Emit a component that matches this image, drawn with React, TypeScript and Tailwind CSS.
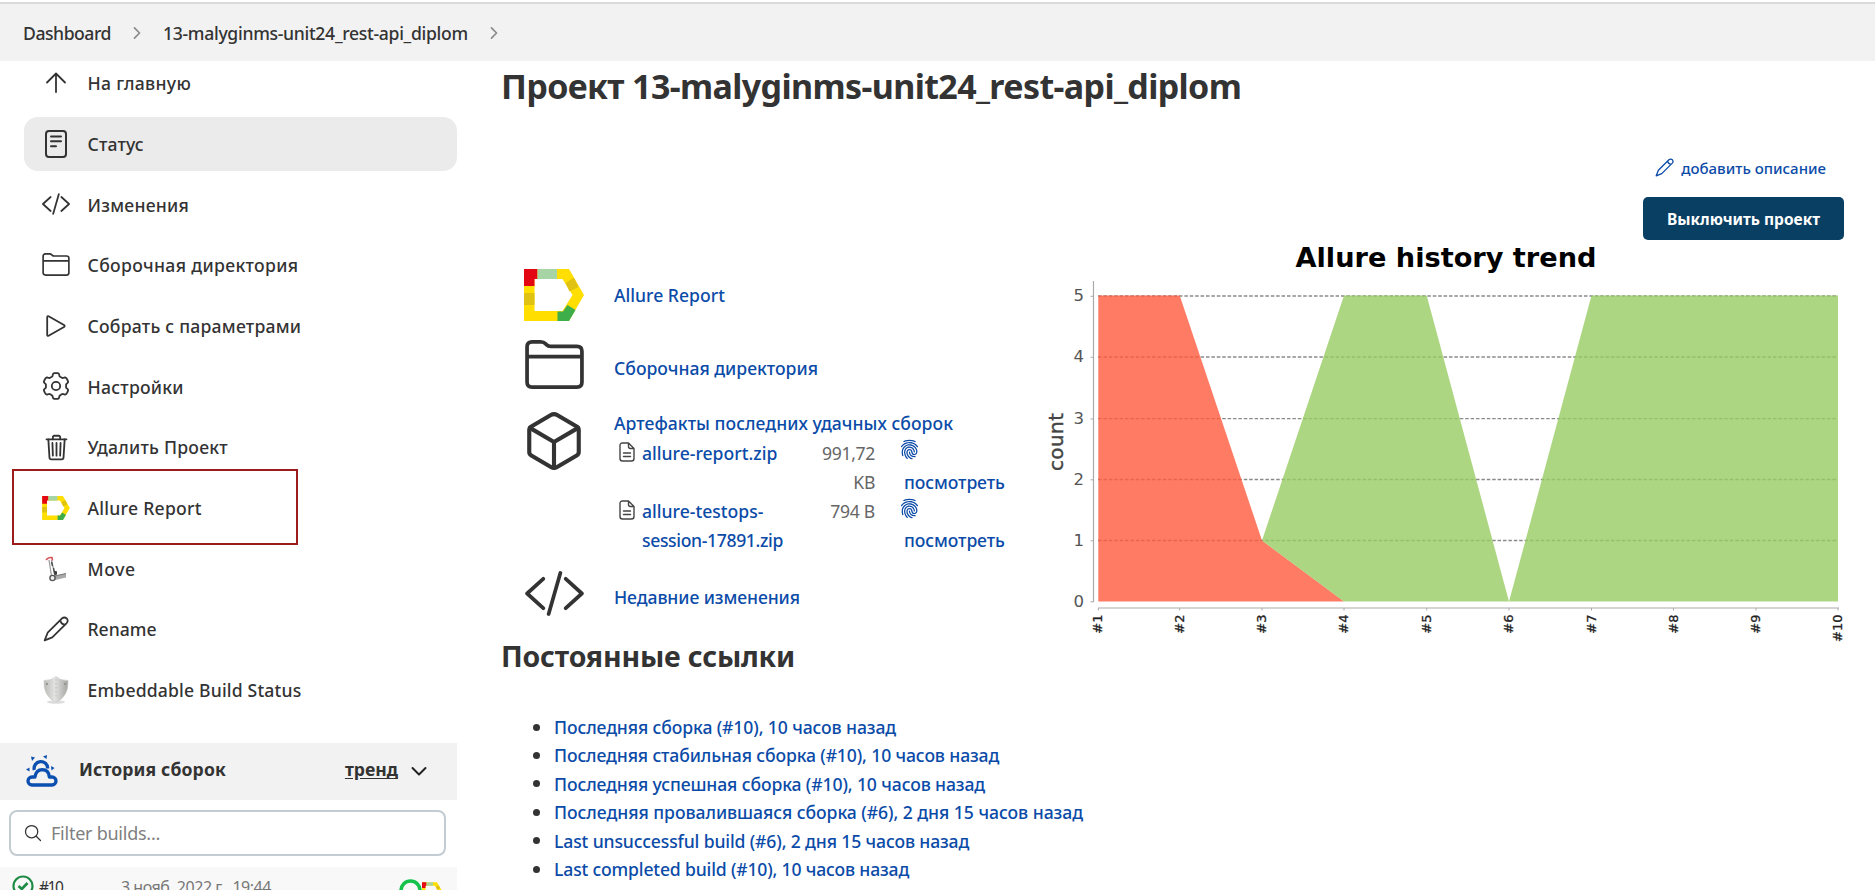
import type { ReactNode } from "react";
import { IoChevronForward, IoCubeOutline, IoFingerPrint, IoSearchOutline, IoTrashOutline } from "react-icons/io5";

function AllureLogo({ className }: { className: string }) {
  return (
    <svg viewBox="0 0 60 52" className={className}>
      <path fill="#ffde00" d="M0 0H45L60 26L45 52H0ZM10.5 10V42H38.5L48.5 26L38.5 10Z" fillRule="evenodd" />
      <path fill="#e30613" d="M0 0H13.5V10H10.5V17H0Z" />
      <path fill="#a7d4a4" d="M13.5 0H33V10H13.5Z" />
      <path fill="#e0c312" d="M0 24H10.5V36H0ZM50 8.7L54.5 18L45.500 22.500L41.500 14Z" />
      <path fill="#3dae49" d="M33.500 42.500H39L43.500 36L51.500 41L45 52H33.500Z" />
    </svg>
  );
}

function Folder({ className, strokeWidth }: { className: string; strokeWidth: number }) {
  return (
    <svg viewBox="0 0 60 50" className={className} fill="none" stroke="currentColor" strokeWidth={strokeWidth} strokeLinejoin="round">
      <path d="M2 17V7Q2 2 7 2H16Q19 2 21 4L22 5Q23.500 6.500 26 6.500H53Q58 6.500 58 11.500V43Q58 48 53 48H7Q2 48 2 43ZM2 17H58" />
    </svg>
  );
}

function CodeSlash({ className, strokeWidth }: { className: string; strokeWidth: number }) {
  return (
    <svg viewBox="0 0 60 46" className={className} fill="none" stroke="currentColor" strokeWidth={strokeWidth} strokeLinejoin="round" strokeLinecap="round">
      <path d="M18.500 8L2 23L18.500 38M41.500 8L58 23L41.500 38M36 2L24 44" />
    </svg>
  );
}

function Pencil({ className, strokeWidth }: { className: string; strokeWidth: number }) {
  return (
    <svg viewBox="0 0 28 28" className={className} fill="none" stroke="currentColor" strokeWidth={strokeWidth} strokeLinejoin="round">
      <path d="M1.800 26.200L5 18L20.500 2.500Q23.200 0.600 25.600 2.700Q27.600 5 25.500 7.600L10 23L1.800 26.200ZM18.700 4.500Q19 8.800 23.600 9.300" />
    </svg>
  );
}

function ArrowUp() {
  return (
    <svg viewBox="0 0 28 28" className="size-7" fill="none" stroke="currentColor" strokeWidth="1.800" strokeLinecap="round" strokeLinejoin="round">
      <path d="M5 13.500L14 4.500L23 13.500M14 4.500V23" />
    </svg>
  );
}

function StatusIcon() {
  return (
    <svg viewBox="0 0 22 28" className="h-7 w-[22px]" fill="none" stroke="currentColor" strokeWidth="2" strokeLinecap="round">
      <rect x="1" y="1" width="20" height="26" rx="3" />
      <path d="M6 6.500H16M6 11.300H16M6 16.200H11" />
    </svg>
  );
}

function PlayIcon() {
  return (
    <svg viewBox="0 0 20 22" className="h-[22px] w-5" fill="none" stroke="currentColor" strokeWidth="1.800" strokeLinejoin="round">
      <path d="M1.200 2.200Q1.200 .6 2.600 1.300L18 10Q19.300 11 18 12L2.600 20.700Q1.200 21.400 1.200 19.800Z" />
    </svg>
  );
}

const gearOutline =
  Array.from({ length: 144 }, (_, i) => {
    const a = (i / 144) * Math.PI * 2;
    const r = 11.5 + 1.45 * Math.tanh(2.6 * (Math.cos(6 * a) + 0.15));
    return `${i ? "L" : "M"}${(14 + r * Math.sin(a)).toFixed(2)} ${(14 - r * Math.cos(a)).toFixed(2)}`;
  }).join("") + "Z";

function Gear() {
  return (
    <svg viewBox="0 0 28 28" className="size-7" fill="none" stroke="currentColor" strokeWidth="1.800" strokeLinejoin="round">
      <path d={gearOutline} />
      <circle cx="14" cy="14" r="4.200" />
    </svg>
  );
}

function HandTruck() {
  return (
    <svg viewBox="0 0 22 26" className="h-[26px] w-[22px]" fill="none">
      <path d="M6.500 4L10 20M4 4L6.500 20" stroke="#999" strokeWidth="1.200" />
      <path d="M6.500 6L7.500 10M8.500 12L9.500 17" stroke="#444" strokeWidth="1.300" />
      <path d="M1 4Q3 1 7 1.500L7.500 4.500" stroke="#d8545a" strokeWidth="1.600" />
      <path d="M9 20L21 17.500V21.500L10 24Z" fill="#a9a9a9" />
      <path d="M10 20L21 17.500" stroke="#777" />
      <rect x="9" y="15" width="3" height="4" rx="1" fill="#444" />
      <circle cx="7.500" cy="22" r="2.600" fill="#eee" stroke="#555" strokeWidth="1.400" />
    </svg>
  );
}

function Shield() {
  return (
    <svg viewBox="0 0 26 28" className="h-7 w-[26px]">
      <defs>
        <linearGradient id="shield">
          <stop offset="0" stopColor="#b9b9b6" />
          <stop offset=".45" stopColor="#e3e3e1" />
          <stop offset="1" stopColor="#a3a3a0" />
        </linearGradient>
      </defs>
      <ellipse cx="13" cy="26" rx="9" ry="1.800" fill="#ddd" />
      <path fill="url(#shield)" stroke="#c9c9c7" strokeWidth=".6" d="M13 .5Q17 4.500 25 4.500Q26 20 13 26.500Q0 20 1 4.500Q9 4.500 13 .5Z" />
      <path stroke="#bbb" strokeDasharray="1.500 2.500" d="M13 3V22" />
      <path stroke="#888" strokeWidth="1.500" d="M3 8H5M21 8H23" />
    </svg>
  );
}

function Weather() {
  return (
    <svg viewBox="0 0 32 32" className="size-8" fill="none" stroke="#0b4fb0" strokeWidth="3.300">
      <path d="M8.300 15A6.800 6.800 0 1 1 21.700 13.500" />
      <path strokeLinejoin="round" d="M6 30H26A4 4 0 0 0 26 22H23.300Q22.800 14.800 16.300 14.700Q10 14.800 9 22H6A4 4 0 0 0 6 30Z" />
      <path stroke="none" fill="#0b4fb0" d="M5 1.500L9 2.500L6 6ZM17 1.500L21 0L20.500 4ZM25 11L28.500 13L25.500 15.500ZM0 14.500L3.500 12.500V16.500Z" />
    </svg>
  );
}

function FileIcon() {
  return (
    <svg viewBox="0 0 16 20" className="h-5 w-4" fill="none" stroke="#444" strokeWidth="1.400" strokeLinejoin="round" strokeLinecap="round">
      <path d="M9.500 1H3.500Q1 1 1 3.500V16.500Q1 19 3.500 19H12.500Q15 19 15 16.500V6.500ZM9.500 1V4.500Q9.500 6.500 11.500 6.500H15M4.500 11H11.500M4.500 14.500H11.500" />
    </svg>
  );
}

const menu: { label: string; tracking: string; active?: boolean; icon: ReactNode }[] = [
  { label: "На главную", tracking: "tracking-[0.320px]", icon: <ArrowUp /> },
  { label: "Статус", tracking: "tracking-[0.150px]", active: true, icon: <StatusIcon /> },
  { label: "Изменения", tracking: "tracking-[0.240px]", icon: <CodeSlash className="h-[22px] w-7" strokeWidth={3.8} /> },
  { label: "Сборочная директория", tracking: "tracking-[0.350px]", icon: <Folder className="-mt-px h-[23px] w-7" strokeWidth={3.6} /> },
  { label: "Собрать с параметрами", tracking: "tracking-[0.230px]", icon: <PlayIcon /> },
  { label: "Настройки", tracking: "tracking-[0.250px]", icon: <Gear /> },
  { label: "Удалить Проект", tracking: "tracking-[0.230px]", icon: <IoTrashOutline className="size-[29px]" /> },
  { label: "Allure Report", tracking: "tracking-[0.260px]", icon: <AllureLogo className="h-6 w-[28px]" /> },
  { label: "Move", tracking: "tracking-[0.600px]", icon: <HandTruck /> },
  { label: "Rename", tracking: "tracking-normal", icon: <Pencil className="size-[26px]" strokeWidth={1.9} /> },
  { label: "Embeddable Build Status", tracking: "tracking-[0.170px]", icon: <Shield /> },
];

const permalinks = [
  { text: "Последняя сборка (#10), 10 часов назад", tracking: "tracking-[-0.110px]" },
  { text: "Последняя стабильная сборка (#10), 10 часов назад", tracking: "tracking-[-0.130px]" },
  { text: "Последняя успешная сборка (#10), 10 часов назад", tracking: "tracking-[-0.115px]" },
  { text: "Последняя провалившаяся сборка (#6), 2 дня 15 часов назад", tracking: "tracking-[-0.045px]" },
  { text: "Last unsuccessful build (#6), 2 дня 15 часов назад", tracking: "tracking-[-0.135px]" },
  { text: "Last completed build (#10), 10 часов назад", tracking: "tracking-[-0.165px]" },
];

const X = [58.3, 139.7, 222, 304, 386.7, 469, 551.5, 633.5, 716, 798];
const Y = [361.5, 300.5, 239.5, 178.7, 117, 56];

function Chart() {
  return (
    <svg width="820" height="410" viewBox="0 0 820 410" className="block shrink-0 font-['DejaVu_Sans']">
      <text x="255.500" y="26.500" fontSize="26" fontWeight="700" textLength="301" lengthAdjust="spacingAndGlyphs">Allure history trend</text>
      <g stroke="#8a8a8a" strokeWidth="1.300" strokeDasharray="3.500 1.900">
        {Y.slice(1).map((y) => <path key={y} d={`M58 ${y}H798`} />)}
      </g>
      <path fill="#ff5a3c" fillOpacity=".8" d="M58.300 55.500H139.700L222 300.500L304 361.500H58.300Z" />
      <path fill="#98cc64" fillOpacity=".8" d="M222 300.500L304 55.500H386.700L469 361.500L551.500 55.500H798V361.500H304Z" />
      <path stroke="#aaa" strokeWidth="1.200" fill="none" d="M53.500 41V362M58 368H799" />
      {Y.map((y, i) => (
        <g key={y}>
          <path stroke="#aaa" d={`M50.500 ${y + 0.3}H53.500`} />
          <text x="44" y={y + 5} fontSize="16.500" textAnchor="end" fill="#555">{i}</text>
        </g>
      ))}
      {X.map((x, i) => (
        <g key={x}>
          <path stroke="#aaa" d={`M${x} 368V370.500`} />
          <text transform={`translate(${x + 4} 374.500) rotate(-90)`} fontSize="13" textAnchor="end" fill="#222" stroke="#222" strokeWidth=".3">#{i + 1}</text>
        </g>
      ))}
      <text transform="translate(23 231) rotate(-90)" fontSize="20" fill="#444" stroke="#444" strokeWidth=".4" textLength="58">count</text>
    </svg>
  );
}

export default function App() {
  return (
    <div className="relative flex h-[890px] w-[1875px] flex-col overflow-hidden bg-white font-['Noto_Sans',sans-serif] text-[17.6px] text-[#333]">
      <header className="mt-0.5 flex h-[59px] shrink-0 items-center border-t-2 border-[#dadada] bg-[#f2f2f2] pl-[23px]">
        <span className="mt-0.5 whitespace-nowrap font-medium tracking-[-0.470px]">Dashboard</span>
        <IoChevronForward className="mx-[17px] size-[18px] text-[#8a8a8a]" />
        <span className="mt-0.5 whitespace-nowrap font-medium tracking-[-0.310px]">13-malyginms-unit24_rest-api_diplom</span>
        <IoChevronForward className="mx-[17px] size-[18px] text-[#8a8a8a]" />
      </header>

      <div className="flex min-h-0 flex-1">
        <aside className="flex w-[457px] shrink-0 flex-col">
          <nav className="-mt-[5px] flex flex-col gap-[6.700px] pl-6">
            {menu.map((m) => (
              <div key={m.label} className={m.active ? "flex h-[54px] shrink-0 items-center rounded-[14px] bg-[#ebebeb]" : "flex h-[54px] shrink-0 items-center"}>
                <span className="mx-[17px] flex w-[30px] justify-center">{m.icon}</span>
                <span className={"-ml-[0.500px] mt-px whitespace-nowrap font-medium " + m.tracking}>{m.label}</span>
              </div>
            ))}
          </nav>
          <div className="mt-[26px] flex h-[57px] shrink-0 items-center bg-[#f2f2f2] pl-[26px] pr-[29px]">
            <Weather />
            <span className="-mt-1 ml-[21px] whitespace-nowrap font-bold tracking-[0.130px]">История сборок</span>
            <span className="-mt-1 ml-auto whitespace-nowrap font-bold underline underline-offset-2">тренд</span>
            <svg viewBox="0 0 18 18" className="ml-3 size-[18px]" fill="none" stroke="#222" strokeWidth="2" strokeLinecap="round" strokeLinejoin="round">
              <path d="M2.500 6L9 12.500L15.500 6" />
            </svg>
          </div>
          <div className="ml-[9px] mr-[11px] mt-2.5 flex h-[46px] shrink-0 items-center rounded-lg border-2 border-[#c3ccd1] pl-3">
            <IoSearchOutline className="size-5" />
            <span className="ml-2 mt-px whitespace-nowrap text-[18px] tracking-[-0.250px] text-[#808080]">Filter builds...</span>
          </div>
          <div className="mt-[11px] flex h-[46px] shrink-0 bg-[#f8f8f8] pl-3 pt-2">
            <svg viewBox="0 0 22 22" className="size-[22px]" fill="none" stroke="#1e8a44" strokeWidth="2.200">
              <circle cx="11" cy="11" r="9.500" />
              <path strokeWidth="2.600" d="M6.500 11L9.800 14L15.500 8" />
            </svg>
            <span className="ml-[5px] w-[82px] whitespace-nowrap text-[15.500px] leading-6 tracking-[-1.500px]">#10</span>
            <span className="whitespace-nowrap text-[16px] leading-6 tracking-[-0.480px] text-[#777]">3 нояб. 2022 г., 19:44</span>
            <svg viewBox="0 0 23 23" className="ml-auto mt-1 size-[23px]">
              <circle cx="11.500" cy="11.500" r="9.500" fill="none" stroke="#14c24b" strokeWidth="3.500" />
            </svg>
            <AllureLogo className="mr-[15px] mt-[7px] h-[18px] w-[20px]" />
          </div>
        </aside>

        <main className="flex min-w-0 flex-1 flex-col pl-11">
          <h1 className="h-12 whitespace-nowrap text-[34px] font-bold leading-[50px] tracking-[-0.620px]">Проект 13-malyginms-unit24_rest-api_diplom</h1>
          <div className="flex">
            <div className="w-[539px] shrink-0 pl-[23px] pt-[151px] font-medium text-[#0b4ba8]">
              <div className="flex h-[70px] items-center">
                <AllureLogo className="h-[52px] w-[60px]" />
                <span className="ml-[30px] whitespace-nowrap">Allure Report</span>
              </div>
              <div className="flex h-[70px] items-center">
                <Folder className="-mt-0.5 h-[49px] w-[61px] text-[#333]" strokeWidth={3.8} />
                <span className="ml-[29px] mt-1.5 whitespace-nowrap">Сборочная директория</span>
              </div>
              <div className="flex h-[159px]">
                <IoCubeOutline className="-mx-[3px] mt-2 size-[66px] shrink-0 text-[#333]" />
                <div className="ml-[30px] pt-[9px]">
                  <div className="whitespace-nowrap leading-7 tracking-[0.040px]">Артефакты последних удачных сборок</div>
                  <div className="mt-0.5 grid grid-cols-[28px_160px_73px_140px] leading-[29px]">
                    <span className="pl-[5px] pt-[3px]"><FileIcon /></span>
                    <span className="whitespace-nowrap">allure-report.zip</span>
                    <span className="text-right font-normal tracking-[-0.340px] text-[#666]">991,72<br />KB</span>
                    <span className="pl-6">
                      <IoFingerPrint className="mb-2 size-[21px]" />
                      <span className="pl-[5px] tracking-[-0.100px]">посмотреть</span>
                    </span>
                    <span className="pl-[5px] pt-[3px]"><FileIcon /></span>
                    <span>allure-testops-<br /><span className="tracking-[-0.360px]">session-17891.zip</span></span>
                    <span className="text-right font-normal tracking-[-0.300px] text-[#666]">794 B</span>
                    <span className="pl-6">
                      <IoFingerPrint className="mb-[7px] mt-px size-[21px]" />
                      <span className="pl-[5px] tracking-[-0.100px]">посмотреть</span>
                    </span>
                  </div>
                </div>
              </div>
              <div className="flex h-[70px] items-center">
                <CodeSlash className="-mt-px h-[45px] w-[61px] text-[#333]" strokeWidth={3.8} />
                <span className="ml-[29px] mt-1.5 whitespace-nowrap tracking-[-0.090px]">Недавние изменения</span>
              </div>
            </div>

            <div className="flex w-[835px] shrink-0 flex-col">
              <div className="mr-[49px] mt-[45px] flex h-7 items-center justify-end text-[15px] font-medium text-[#0b4ba8]">
                <Pencil className="-mt-0.5 mr-[7px] size-[19px]" strokeWidth={1.9} />
                <span className="whitespace-nowrap">добавить описание</span>
              </div>
              <div className="mr-[31px] mt-[15px] flex h-[43px] w-[201px] shrink-0 items-center justify-center self-end rounded-[5px] bg-[#093f62] text-[15.500px] font-bold text-white">
                <span className="mt-[3px] whitespace-nowrap">Выключить проект</span>
              </div>
              <Chart />
            </div>
          </div>
          <h2 className="-mt-[14px] h-10 whitespace-nowrap text-[28.500px] font-bold leading-10 tracking-[-0.200px]">Постоянные ссылки</h2>
          <ul className="mt-[37px] font-medium text-[#0b4ba8]">
            {permalinks.map((p) => (
              <li key={p.text} className="flex h-[28.400px] items-center">
                <span className="ml-8 mr-[14px] size-[7px] rounded-full bg-[#333]" />
                <span className={"whitespace-nowrap " + p.tracking}>{p.text}</span>
              </li>
            ))}
          </ul>
        </main>
      </div>

      <div className="absolute left-3 top-[469px] h-[76px] w-[286px] border-2 border-[#9c1b1b]" />
    </div>
  );
}
